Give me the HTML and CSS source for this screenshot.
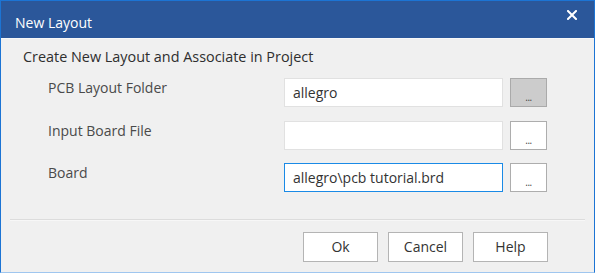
FILE: index.html
```html
<!DOCTYPE html>
<html>
<head>
<meta charset="utf-8">
<title>New Layout</title>
<link rel="stylesheet" href="styles.css">
</head>
<body>
<div class="dialog">
  <div class="titlebar">
    <span class="title">New Layout</span>
    <svg class="close" width="10" height="10" viewBox="0 0 10 10"><path d="M1 1 L9 9 M9 1 L1 9" stroke="#fff" stroke-width="2" stroke-linecap="square"/></svg>
  </div>
  <div class="content">
    <div class="heading">Create New Layout and Associate in Project</div>
    <div class="form">
      <div class="label">PCB Layout Folder</div>
      <div class="input">allegro</div>
      <div class="browse pressed">...</div>
      <div class="label">Input Board File</div>
      <div class="input"></div>
      <div class="browse">...</div>
      <div class="label">Board</div>
      <div class="input focused">allegro\pcb tutorial.brd</div>
      <div class="browse">...</div>
    </div>
    <div class="separator"></div>
    <div class="actions">
      <div class="btn">Ok</div>
      <div class="btn">Cancel</div>
      <div class="btn">Help</div>
    </div>
  </div>
</div>
</body>
</html>
```
FILE: styles.css
```css
html, body {
  margin: 0;
  padding: 0;
}
body {
  width: 595px;
  height: 273px;
  overflow: hidden;
  font-family: "Open Sans", "Noto Sans", sans-serif;
  font-size: 14px;
  color: #333;
}
.dialog {
  box-sizing: border-box;
  width: 595px;
  height: 273px;
  border: 1px solid #1c74d4;
  border-bottom-color: #9fc6ef;
  background: #f0f0f0;
  display: flex;
  flex-direction: column;
}
.titlebar {
  height: 37px;
  flex: none;
  background: #2b579a;
  display: flex;
  justify-content: space-between;
  align-items: flex-start;
  padding: 0 17px 0 14px;
  color: #fff;
}
.title {
  font-size: 14px;
  line-height: 20px;
  margin-top: 12px;
}
.close {
  margin-top: 9px;
}
.content {
  flex: 1;
  display: flex;
  flex-direction: column;
  border-top: 1px solid #f8f8f8;
}
.heading {
  margin: 8px 0 0 22px;
  font-size: 14.4px;
  line-height: 20px;
  color: #2e2e2e;
}
.form {
  display: grid;
  grid-template-columns: 229px 219px 37px;
  grid-auto-rows: 29px;
  column-gap: 7px;
  row-gap: 13.5px;
  margin: 11px 0 0 47px;
}
.label {
  line-height: 20px;
  color: #4a4a4a;
  align-self: start;
}
.input {
  box-sizing: border-box;
  background: #fff;
  border: 1px solid #e1e1e1;
  padding: 0 8px;
  line-height: 27px;
  color: #333;
  white-space: nowrap;
  overflow: hidden;
}
.input.focused {
  border-color: #1a8ae6;
}
.browse {
  box-sizing: border-box;
  background: #fff;
  border: 1px solid #adadad;
  font-size: 10px;
  line-height: 10px;
  text-align: center;
  padding-top: 13px;
  color: #444;
  letter-spacing: -0.5px;
}
.browse.pressed {
  background: #cccccc;
  border-color: #aaaaaa;
}
.separator {
  margin: 27px 9px 0 9px;
  height: 1px;
  background: #dcdcdc;
  border-bottom: 1px solid #f7f7f7;
}
.actions {
  display: flex;
  justify-content: flex-end;
  gap: 10px;
  margin: 11px 46px 0 0;
}
.btn {
  box-sizing: border-box;
  width: 75px;
  height: 30px;
  background: #fff;
  border: 1px solid #b4b4b4;
  line-height: 28px;
  text-align: center;
  color: #333;
}
```
